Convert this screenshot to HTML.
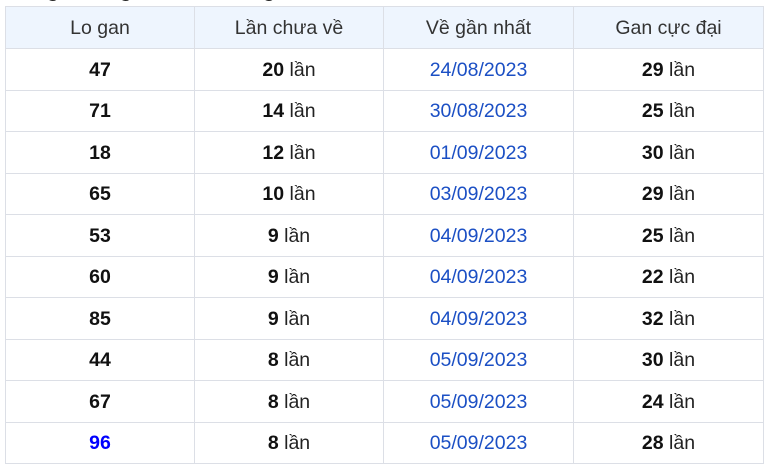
<!DOCTYPE html>
<html><head><meta charset="utf-8"><style>
body{margin:0;width:768px;height:468px;background:#fff;overflow:hidden;font-family:"Liberation Sans",Arial,sans-serif;position:relative}
.t{position:absolute;left:-4px;top:-20px;font-size:20px;font-weight:bold;color:#222;white-space:nowrap;letter-spacing:0.5px}
table{position:absolute;left:5px;top:6px;border-collapse:collapse;width:758px;table-layout:fixed}
td,th{border:1px solid #dcdfe6;text-align:center;font-size:19.5px;color:#222;padding:2px 0 0 0}
th{font-weight:normal;background:#eef5fe;height:39px;color:#333}
td{height:38.5px}
b{font-weight:bold;color:#111}
.d{color:#1b4fc4}
.bl{color:#0000ff}
</style></head><body>
<div class="t">Thống kê lô gan miền Trung</div>
<table>
<colgroup><col style="width:189px"><col style="width:189px"><col style="width:190px"><col style="width:190px"></colgroup>
<tr><th>Lo gan</th><th>Lần chưa về</th><th>Về gần nhất</th><th>Gan cực đại</th></tr>
<tr><td><b>47</b></td><td><b>20</b> lần</td><td class="d">24/08/2023</td><td><b>29</b> lần</td></tr>
<tr><td><b>71</b></td><td><b>14</b> lần</td><td class="d">30/08/2023</td><td><b>25</b> lần</td></tr>
<tr><td><b>18</b></td><td><b>12</b> lần</td><td class="d">01/09/2023</td><td><b>30</b> lần</td></tr>
<tr><td><b>65</b></td><td><b>10</b> lần</td><td class="d">03/09/2023</td><td><b>29</b> lần</td></tr>
<tr><td><b>53</b></td><td><b>9</b> lần</td><td class="d">04/09/2023</td><td><b>25</b> lần</td></tr>
<tr><td><b>60</b></td><td><b>9</b> lần</td><td class="d">04/09/2023</td><td><b>22</b> lần</td></tr>
<tr><td><b>85</b></td><td><b>9</b> lần</td><td class="d">04/09/2023</td><td><b>32</b> lần</td></tr>
<tr><td><b>44</b></td><td><b>8</b> lần</td><td class="d">05/09/2023</td><td><b>30</b> lần</td></tr>
<tr><td><b>67</b></td><td><b>8</b> lần</td><td class="d">05/09/2023</td><td><b>24</b> lần</td></tr>
<tr><td><b class="bl">96</b></td><td><b>8</b> lần</td><td class="d">05/09/2023</td><td><b>28</b> lần</td></tr>
</table>
</body></html>
